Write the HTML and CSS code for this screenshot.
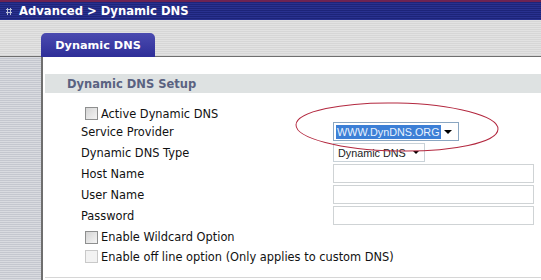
FILE: index.html
```html
<!DOCTYPE html>
<html lang="en">
<head>
  <meta charset="UTF-8" />
  <title>Dynamic DNS</title>
  <link rel="stylesheet" href="styles.css">
</head>
<body>

<div class="page">
  <div class="title-bar">
    <span class="title-icon"></span>
    <span class="title-text">Advanced &gt; Dynamic DNS</span>
  </div>

  <div class="tab-bar">
    <div class="tab">Dynamic DNS</div>
  </div>

  <div class="body-row">
    <div class="sidebar"></div>

    <div class="content">
      <div class="section-head">Dynamic DNS Setup</div>

      <div class="form">
        <div class="check-row first">
          <span class="box"></span> Active Dynamic DNS
        </div>

        <div class="row">
          <span class="label">Service Provider</span>
          <div class="select provider">
            <span class="sel-text">WWW.DynDNS.ORG</span>
            <span class="arrow"></span>
          </div>
        </div>

        <div class="row">
          <span class="label">Dynamic DNS Type</span>
          <div class="select dns-type">
            <span>Dynamic DNS</span>
            <span class="arrow small"></span>
          </div>
        </div>

        <div class="row">
          <span class="label">Host Name</span>
          <div class="text-input"></div>
        </div>

        <div class="row">
          <span class="label">User Name</span>
          <div class="text-input"></div>
        </div>

        <div class="row">
          <span class="label">Password</span>
          <div class="text-input"></div>
        </div>

        <div class="check-row wild">
          <span class="box"></span> Enable Wildcard Option
        </div>

        <div class="check-row last">
          <span class="box disabled"></span> Enable off line option (Only applies to custom DNS)
        </div>
      </div>

      <div class="bottom-line"></div>
    </div>
  </div>

  <!-- red mark drawn over the provider drop-down -->
  <svg class="ring" width="541" height="280">
    <ellipse cx="397" cy="127" rx="101" ry="24" transform="rotate(1.2 397 127)" fill="none" stroke="#b3283f" stroke-width="1" />
  </svg>
</div>

</body>
</html>
```

FILE: styles.css
```css
body {
  margin: 0;
  font-family: "DejaVu Sans", Verdana, sans-serif;
  background: #fff;
}

.page {
  position: relative;
  width: 541px;
  height: 280px;
  overflow: hidden;
}

/* Navy title bar */
.title-bar {
  height: 18px;
  border-top: 2px solid #6e2352;
  background: repeating-linear-gradient(to bottom, #1d2479 0, #1d2479 1px, #29318f 1px, #29318f 2px);
  display: flex;
  align-items: center;
  padding-left: 6px;
  box-sizing: content-box;
}

.title-icon {
  width: 6px;
  height: 7px;
  margin-right: 7px;
  background: radial-gradient(circle, #b9bfd6 1px, transparent 1.4px) 0 0 / 3px 3px;
}

.title-text {
  color: #fff;
  font-weight: bold;
  font-size: 11.6px;
}

/* Gray band with the tab */
.tab-bar {
  height: 37px;
  background: repeating-linear-gradient(to bottom, #e2e2e2 0, #e2e2e2 1px, #d6d6d6 1px, #d6d6d6 2px);
  display: flex;
  align-items: flex-end;
  padding-left: 41px;
  border-bottom: 1px solid #6f6f6f;
  box-sizing: border-box;
}

.tab {
  width: 114px;
  height: 24px;
  margin-bottom: -1px;
  border-radius: 5px 5px 0 0;
  background: linear-gradient(to bottom, #4b4bb0, #2e2e98);
  color: #fff;
  font-weight: bold;
  font-size: 11.3px;
  display: flex;
  align-items: center;
  justify-content: center;
}

.body-row {
  display: flex;
  height: 223px;
}

.sidebar {
  width: 41px;
  border-right: 2px solid #6f6f6f;
  background: repeating-linear-gradient(to bottom, #d9dbe0 0, #d9dbe0 1px, #c4c7cf 1px, #c4c7cf 2px);
}

.content {
  flex: 1;
  padding: 17px 0 0 2px;
  display: flex;
  flex-direction: column;
}

.section-head {
  height: 19px;
  background: #dee2e2;
  color: #5a6281;
  font-weight: bold;
  font-size: 11.5px;
  padding-left: 22px;
  display: flex;
  align-items: center;
}

.form {
  padding: 13px 0 0 36px;
  font-size: 11.4px;
  color: #111;
}

.row {
  display: flex;
  align-items: center;
  height: 21px;
}

.label {
  width: 252px;
}

.check-row {
  display: flex;
  align-items: center;
  padding-left: 4px;
}

.check-row.first {
  height: 15px;
}

.check-row.wild {
  margin-top: 2px;
  height: 18px;
}

.check-row.last {
  height: 21px;
}

.box {
  width: 11px;
  height: 11px;
  border: 1px solid #8e8f8f;
  background: linear-gradient(135deg, #d4d4d4, #f4f4f4);
  margin-right: 3px;
}

.box.disabled {
  border-color: #c9c9c9;
  background: #f2f2f2;
}

.select {
  height: 19px;
  box-sizing: border-box;
  border: 1px solid #c9d2d8;
  background: #fff;
  display: flex;
  align-items: center;
  font-family: "Liberation Sans", Arial, sans-serif;
  padding-left: 2px;
}

.select.provider {
  width: 126px;
  border-color: #8aa6c1;
  font-size: 10.8px;
}

.sel-text {
  background: #3c7fd6;
  color: #e8f2ff;
  padding: 1px 1px;
}

.select.dns-type {
  width: 92px;
  font-size: 10.8px;
  color: #222;
  padding-left: 4px;
}

.arrow {
  margin-left: auto;
  margin-right: 6px;
  border-left: 4px solid transparent;
  border-right: 4px solid transparent;
  border-top: 4px solid #000;
}

.arrow.small {
  margin-right: 5px;
  border-left-width: 3px;
  border-right-width: 3px;
  border-top-width: 3px;
}

.text-input {
  width: 201px;
  height: 19px;
  box-sizing: border-box;
  border: 1px solid #cfd3d5;
  background: #fff;
}

.bottom-line {
  margin-top: auto;
  margin-bottom: 2px;
  border-top: 1px solid #d6d6d6;
}

.ring {
  position: absolute;
  left: 0;
  top: 0;
}
```
